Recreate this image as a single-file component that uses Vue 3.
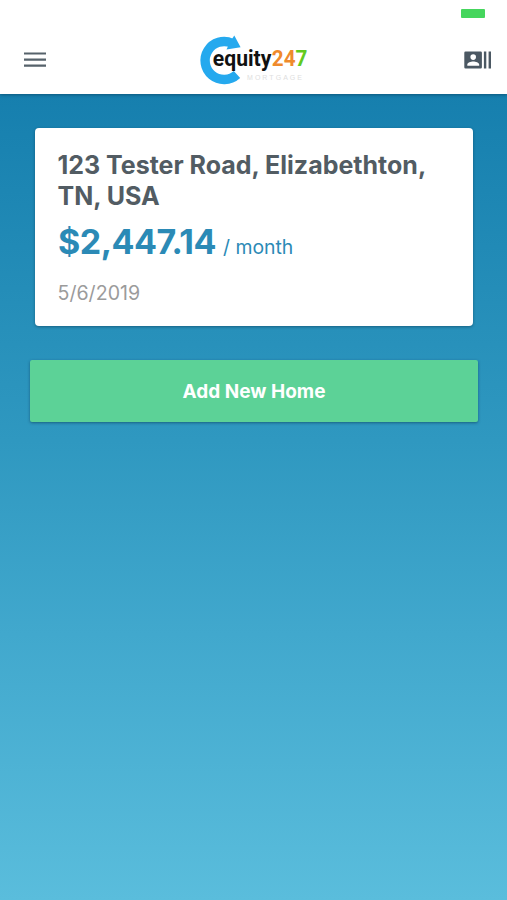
<script setup>
const home = {
  address: '123 Tester Road, Elizabethton, TN, USA',
  payment: '$2,447.14',
  period: '/ month',
  date: '5/6/2019',
}
</script>

<template>
  <div class="screen">
    <header class="header">
      <div class="status"><span class="battery"></span></div>
      <nav class="toolbar">
        <button class="icon-button" aria-label="Menu">
          <svg width="24" height="18" viewBox="0 0 24 18">
            <path d="M1 2.5h22M1 8.7h22M1 14.7h22" stroke="#56626b" stroke-width="2.2" fill="none" />
          </svg>
        </button>
        <svg class="logo" width="112" height="56" viewBox="0 0 112 56" role="img" aria-label="equity247 mortgage">
          <path d="M34 11.3A19 19 0 1 0 39 42.5" fill="none" stroke="#25a9ee" stroke-width="9.4" />
          <path d="M36.3 3.6 42.6 15.2 28.5 17.6 32 10Z" fill="#25a9ee" />
          <g class="wordmark">
            <text x="14.8" y="33.5" textLength="58.6" lengthAdjust="spacingAndGlyphs" fill="#111">equity</text>
            <text x="73.8" y="33.5" textLength="35.6" lengthAdjust="spacingAndGlyphs" fill="#ef8a2c">24<tspan fill="#62ca20">7</tspan></text>
          </g>
          <text class="tagline" x="49" y="47.5" textLength="55">MORTGAGE</text>
        </svg>
        <button class="icon-button" aria-label="Contacts">
          <svg width="28" height="18" viewBox="0 0 28 18">
            <path fill="#4b5863" fill-rule="evenodd" d="M1.5 .5h15.2a1.2 1.2 0 0 1 1.2 1.2v14.6a1.2 1.2 0 0 1-1.2 1.2H1.5a1.2 1.2 0 0 1-1.2-1.2V1.7A1.2 1.2 0 0 1 1.5 .5ZM9.2 3.3a2.8 2.8 0 1 0 0 5.6 2.8 2.8 0 0 0 0-5.6ZM3.3 14.7h11.9v-1.1c0-2.1-3.6-3.2-6-3.2s-5.9 1.1-5.9 3.2Z" />
            <path fill="#4b5863" d="M19.9.5h2.4v17h-2.4zM24.6.5h2.4v17h-2.4z" />
          </svg>
        </button>
      </nav>
    </header>
    <main class="content">
      <article class="card">
        <h1 class="address">{{ home.address }}</h1>
        <p class="payment"><strong class="amount">{{ home.payment }}</strong><span class="period">{{ home.period }}</span></p>
        <p class="date">{{ home.date }}</p>
      </article>
      <button class="add">Add New Home</button>
    </main>
  </div>
</template>

<style>
body { margin: 0; }
</style>

<style scoped>
.screen {
  box-sizing: border-box;
  display: flex;
  flex-direction: column;
  height: 900px;
  font-family: Inter, "Liberation Sans", sans-serif;
  background: #1780af;
}
.header {
  position: relative;
  height: 94px;
  background: #fff;
  box-shadow: 0 1px 3px rgba(0, 30, 50, .4);
}
.status {
  display: flex;
  justify-content: flex-end;
  box-sizing: border-box;
  height: 26px;
  padding: 9px 22.5px 0 0;
}
.battery {
  width: 24px;
  height: 8.5px;
  border-radius: 1px;
  background: #45d65d;
}
.toolbar {
  display: grid;
  grid-template-columns: 175px 112px 1fr;
  align-items: center;
  height: 68px;
  padding: 0 15px 0 23px;
}
.icon-button {
  display: flex;
  padding: 0;
  border: 0;
  background: none;
}
.icon-button:last-child { justify-self: end; }
.logo { display: block; }
.wordmark {
  font: 700 22px Roboto, sans-serif;
}
.tagline {
  font: 400 7px "Liberation Sans", sans-serif;
  fill: #dedede;
}
.content {
  flex: 1;
  display: flex;
  flex-direction: column;
  padding: 34px 29px 0 30px;
  background: linear-gradient(#167fae 0%, #2f98c0 43%, #41a8cd 67%, #5abddc 100%);
}
.card {
  box-sizing: border-box;
  height: 198px;
  margin: 0 5px;
  padding: 22px 23px 0 22.5px;
  border-radius: 4px;
  background: #fff;
  box-shadow: 0 1px 3px rgba(0, 30, 50, .4);
}
.address {
  margin: 0;
  color: #525c63;
  font-size: 25px;
  font-weight: 650;
  line-height: 31px;
}
.payment {
  display: flex;
  align-items: baseline;
  margin: 8px 0 0;
  color: #2b8ab6;
  line-height: 44px;
}
.amount {
  margin-left: .5px;
  font-size: 34px;
  font-weight: 700;
  letter-spacing: -.5px;
}
.period {
  margin-left: 7px;
  font-size: 19.4px;
}
.date {
  margin: 11.5px 0 0;
  color: #9b9b9b;
  font-size: 19.6px;
  line-height: 24px;
}
.add {
  height: 62px;
  margin-top: 34px;
  padding: 0;
  border: 0;
  border-radius: 2px;
  color: #fff;
  background: #5cd297;
  box-shadow: 0 1px 3px rgba(0, 30, 50, .45);
  font: 650 19px Inter, sans-serif;
}
</style>
